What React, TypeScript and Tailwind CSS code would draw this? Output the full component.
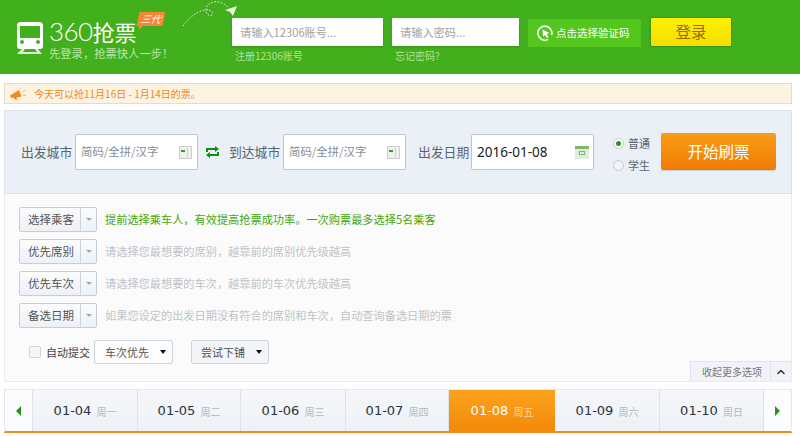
import React from 'react';
import { ChevronUp } from 'lucide-react';

const cjk = '"Noto Sans CJK SC", "Noto Sans", sans-serif';

const optionRows = [
  { label: '选择乘客', hint: '提前选择乘车人，有效提高抢票成功率。一次购票最多选择5名乘客', green: true },
  { label: '优先席别', hint: '请选择您最想要的席别，越靠前的席别优先级越高', green: false },
  { label: '优先车次', hint: '请选择您最想要的车次，越靠前的车次优先级越高', green: false },
  { label: '备选日期', hint: '如果您设定的出发日期没有符合的席别和车次，自动查询备选日期的票', green: false },
];

const dates = [
  { date: '01-04', day: '周一', width: 'w-[105px]' },
  { date: '01-05', day: '周二', width: 'w-[103px]' },
  { date: '01-06', day: '周三', width: 'w-[105px]' },
  { date: '01-07', day: '周四', width: 'w-[103px]' },
  { date: '01-08', day: '周五', width: 'w-[106px]', active: true },
  { date: '01-09', day: '周六', width: 'w-[105px]' },
  { date: '01-10', day: '周日', width: 'w-[104px]' },
];

const TrainLogo = () => (
  <svg width="28" height="34" viewBox="0 0 28 34" fill="none">
    <path d="M5 1h18a4 4 0 0 1 4 4v20a3 3 0 0 1-3 3H4a3 3 0 0 1-3-3V5a4 4 0 0 1 4-4z" fill="#fff" />
    <rect x="4" y="5" width="20" height="12" fill="#42b01c" />
    <rect x="4" y="19" width="4" height="4" rx="2" fill="#42b01c" />
    <rect x="20" y="19" width="4" height="4" rx="2" fill="#42b01c" />
    <path d="M6 28h3l-2 3h14l-2-3h3l4 5H1z" fill="#fff" opacity="0.8" />
  </svg>
);

const PaperPlane = () => (
  <svg width="56" height="28" viewBox="0 0 56 28" fill="none">
    <path
      d="M1 26c5-7 12-14 22-16 6-1 9 3 7 5-3 2-7-2-6-6 1-6 9-9 16-6 3 1 5 3 6 5"
      stroke="#d8efcc"
      strokeWidth="1"
      strokeDasharray="1.6 1.6"
    />
    <path d="M43 10l12-4-4 10-3-4z" fill="#e6f5dc" />
  </svg>
);

const CityIcon = () => (
  <span className="flex h-[13px] w-[13px] border border-[#c9ced4] bg-[#eef0ef] pl-[1px] pt-[3px]">
    <span className="h-[2px] w-[4px] bg-[#2aa90f]" />
    <span className="ml-[2px] mt-[-2px] h-[9px] w-px bg-[#d5d9dc]" />
  </span>
);

const CalendarIcon = () => (
  <svg width="14" height="13" viewBox="0 0 14 13" fill="none">
    <rect x="0" y="0" width="14" height="13" fill="#e4eadf" />
    <rect x="0" y="0" width="14" height="3" fill="#7fb76a" />
    <rect x="4.5" y="5.5" width="5" height="3" fill="none" stroke="#7fb76a" />
  </svg>
);

const SwapIcon = () => (
  <svg width="15" height="12" viewBox="0 0 15 12" fill="#0f8f10">
    <path d="M10 0l4 3-4 3V4H3v2H1V2h9z" />
    <path d="M5 12L1 9l4-3v2h7V6h2v4H5z" />
  </svg>
);

const CursorCircle = () => (
  <svg width="16" height="16" viewBox="0 0 16 16" fill="none">
    <path d="M11 14.4A7 7 0 1 1 14.6 10" stroke="#fff" strokeWidth="1.6" />
    <path d="M5.5 4.5l7 3.4-2.8 1 1.8 3.4-1.6.8-1.8-3.2-2 1.8z" fill="#fff" />
  </svg>
);

const Megaphone = () => (
  <svg width="17" height="13" viewBox="0 0 17 13" fill="none">
    <path d="M0 8.5L9 3l2.5 6.5-5 1 .8 2H4.6L3.8 10.6 1 11z" fill="#ef8a1d" />
    <path d="M9.5 2l1-1.5M12 5l3.5-2M12.5 8l3.5.5" stroke="#f3bb76" strokeWidth="1" />
  </svg>
);

const CityInput = () => (
  <div className="flex h-[36px] w-[123px] items-center justify-between rounded-[2px] border border-[#bcc6d2] bg-white pl-[5px] pr-[5px]">
    <span className="text-[11.4px] text-[#8a8f96]">简码/全拼/汉字</span>
    <CityIcon />
  </div>
);

const PickButton = ({ label }: { label: string }) => (
  <div className="flex h-[25px] w-[78px] rounded-[2px] border border-[#c3ced9] bg-gradient-to-b from-[#fbfcfd] to-[#edf1f6]">
    <span className="flex w-[61px] items-center justify-center border-r border-[#ccd5df] pl-[2px] pt-[1px] text-[11.5px] text-[#555]">{label}</span>
    <span className="flex flex-1 items-center justify-center">
      <span className="h-0 w-0 border-x-[3px] border-t-[3px] border-x-transparent border-t-[#a3a9b0]" />
    </span>
  </div>
);

const SelectBox = ({ label, className }: { label: string; className: string }) => (
  <div className={`flex h-[24px] items-center justify-between rounded-[2px] border border-[#cbd5df] pr-[6px] ${className}`}>
    <span className="text-[11px] text-[#555]">{label}</span>
    <span className="h-0 w-0 border-x-[3px] border-t-[4px] border-x-transparent border-t-[#111]" />
  </div>
);

const App: React.FC = () => {
  return (
    <div className="h-[436px] w-[800px] overflow-hidden bg-white" style={{ fontFamily: cjk }}>
      {/* top bar */}
      <div className="flex h-[74px] bg-[#42b01c]">
        <div className="ml-[16px] mt-[21px]">
          <TrainLogo />
        </div>
        <div className="relative ml-[5px] mt-[15px] w-[183px]">
          <div className="flex h-[32px] items-center text-white">
            <span className="text-[26px] font-light leading-none tracking-[-0.6px]" style={{ fontFamily: 'Lato, sans-serif' }}>360</span>
            <span className="text-[22px] font-normal leading-none">抢票</span>
          </div>
          <div className="mt-[-2px] text-[11.3px] leading-[16px] text-[#bfe5ad]">先登录，抢票快人一步！</div>
          <span className="absolute left-[89px] top-[-3px] flex h-[14px] w-[26px] -skew-x-12 items-center justify-center bg-[#f58634] text-[10px] italic leading-none text-white">三代</span>
          <span className="absolute left-[90px] top-[11px] h-0 w-0 border-r-[4px] border-t-[4px] border-r-transparent border-t-[#f58634]" />
          <div className="absolute left-[133px] top-[-15px]">
            <PaperPlane />
          </div>
        </div>
        <div className="mt-[18px] w-[151px]">
          <div className="flex h-[28px] items-center bg-white pl-[8px] text-[11.2px] text-[#a2a2a2] shadow-[0_1px_2px_rgba(0,0,0,0.2)]">请输入12306账号...</div>
          <div className="mt-[2px] pl-[3px] text-[10px] leading-[16px] text-[#b5e0a0]">注册12306账号</div>
        </div>
        <div className="ml-[9px] mt-[18px] w-[127px]">
          <div className="flex h-[28px] items-center bg-white pl-[8px] text-[11.2px] text-[#a2a2a2] shadow-[0_1px_2px_rgba(0,0,0,0.2)]">请输入密码...</div>
          <div className="mt-[2px] pl-[3px] text-[10px] leading-[16px] text-[#b5e0a0]">忘记密码?</div>
        </div>
        <div className="ml-[9px] mt-[19px] flex h-[28px] w-[113px] items-center rounded-[1px] bg-[#54c71e] pl-[9px] text-[10.5px] text-white">
          <CursorCircle />
          <span className="ml-[3px]">点击选择验证码</span>
        </div>
        <div className="ml-[10px] mt-[18px] flex h-[28px] w-[80px] items-center justify-center rounded-[1px] bg-gradient-to-b from-[#fff200] to-[#f5dc00] text-[15.5px] text-[#9a6a00] shadow-[0_0_2px_rgba(0,60,0,0.7)]">登录</div>
      </div>

      <div className="ml-[4px] w-[788px]">
        {/* notice */}
        <div className="mt-[9px] flex h-[21px] items-center border border-[#e8dcc0] bg-[#fdf3e3] pl-[5px] text-[10px] text-[#ee8a1f]">
          <Megaphone />
          <span className="ml-[7px]">今天可以抢11月16日 - 1月14日的票。</span>
        </div>

        {/* search panel */}
        <div className="mt-[6px] flex h-[84px] items-start border border-[#dbe3ec] bg-[#ebf0f7] pl-[16px] pt-[23px]">
          <span className="w-[54px] text-[12.8px] leading-[36px] text-[#5a6470]">出发城市</span>
          <CityInput />
          <span className="ml-[7px] mt-[12px]">
            <SwapIcon />
          </span>
          <span className="ml-[9px] w-[54px] text-[12.8px] leading-[36px] text-[#5a6470]">到达城市</span>
          <CityInput />
          <span className="ml-[12px] w-[53px] text-[12.8px] leading-[36px] text-[#5a6470]">出发日期</span>
          <div className="flex h-[36px] w-[123px] items-center justify-between rounded-[2px] border border-[#bcc6d2] bg-white pl-[5px] pr-[4px]">
            <span className="text-[13.5px] text-[#222]" style={{ fontFamily: '"Noto Sans", sans-serif' }}>2016-01-08</span>
            <span className="pt-[1px]">
              <CalendarIcon />
            </span>
          </div>
          <div className="ml-[19px] mt-[1px] flex flex-col gap-[6px]">
            <div className="flex h-[16px] items-center">
              <span className="flex h-[11px] w-[11px] items-center justify-center rounded-full border border-[#c3c9d0] bg-white">
                <span className="h-[5px] w-[5px] rounded-full bg-[#1f9a12]" />
              </span>
              <span className="ml-[4px] text-[11px] text-[#5a6470]">普通</span>
            </div>
            <div className="flex h-[16px] items-center">
              <span className="h-[11px] w-[11px] rounded-full border border-[#c3c9d0] bg-[#f3f4f5]" />
              <span className="ml-[4px] text-[11px] text-[#5a6470]">学生</span>
            </div>
          </div>
          <div className="ml-[11px] mt-[-1px] flex h-[37px] w-[115px] items-center justify-center rounded-[2px] bg-gradient-to-b from-[#fb9c17] to-[#ef7b02] text-[15.5px] text-white shadow-[0_1px_1px_rgba(0,0,0,0.15)]">开始刷票</div>
        </div>

        {/* options panel */}
        <div className="h-[188px] border-x border-b border-[#e9ecef] bg-[#fbfbfb] pl-[14px] pt-[13px]">
          {optionRows.map((row, i) => (
            <div key={row.label} className={`flex items-center ${i > 0 ? 'mt-[7px]' : ''}`}>
              <PickButton label={row.label} />
              <span className={`ml-[8px] text-[11.2px] ${row.green ? 'text-[#44a80f]' : 'text-[#c0c3c6]'}`}>{row.hint}</span>
            </div>
          ))}
          <div className="mt-[12px] flex items-center pl-[10px]">
            <span className="h-[12px] w-[12px] rounded-[2px] border border-[#d0d4d9] bg-[#f3f4f5]" />
            <span className="ml-[5px] text-[11px] text-[#444]">自动提交</span>
            <SelectBox label="车次优先" className="ml-[4px] w-[79px] bg-[#fdfdfe] pl-[10px]" />
            <SelectBox label="尝试下铺" className="ml-[18px] w-[78px] bg-[#f3f5f8] pl-[9px]" />
          </div>
          <div className="mt-[-3px] flex justify-end">
            <div className="flex h-[20px] border-l border-t border-[#dfe4ea] bg-[#f0f3f7]">
              <span className="flex w-[80px] items-center justify-end border-r border-[#dfe4ea] pr-[8px] text-[10px] text-[#777]">收起更多选项</span>
              <span className="flex w-[20px] items-center justify-center">
                <ChevronUp size={12} strokeWidth={3} color="#333" />
              </span>
            </div>
          </div>
        </div>

        {/* date strip */}
        <div className="mt-[7px] flex h-[44px] border-x border-t border-b-2 border-[#e5e9ee] border-b-[#f08a24] bg-gradient-to-b from-[#f5f7fa] to-[#edf1f6]">
          <span className="flex w-[28px] items-center justify-center border-r border-[#dde3ea] bg-[#fbfcfd]">
            <span className="h-0 w-0 border-y-[5px] border-r-[5px] border-y-transparent border-r-[#1f9a12]" />
          </span>
          {dates.map((d) => (
            <div
              key={d.date}
              className={`flex items-center justify-center ${d.width} ${d.active ? 'bg-gradient-to-b from-[#fda31b] to-[#f28a0a]' : 'border-r border-[#dde3ea]'}`}
            >
              <span className={`text-[13px] ${d.active ? 'text-white' : 'text-[#2a3340]'}`} style={{ fontFamily: '"DejaVu Sans", sans-serif' }}>{d.date}</span>
              <span className={`ml-[5px] mt-[2px] text-[10px] ${d.active ? 'text-[#fcd9a6]' : 'text-[#b4b8bd]'}`}>{d.day}</span>
            </div>
          ))}
          <span className="flex flex-1 items-center justify-center bg-[#fbfcfd]">
            <span className="h-0 w-0 border-y-[5px] border-l-[5px] border-y-transparent border-l-[#1f9a12]" />
          </span>
        </div>
      </div>
    </div>
  );
};

export default App;
